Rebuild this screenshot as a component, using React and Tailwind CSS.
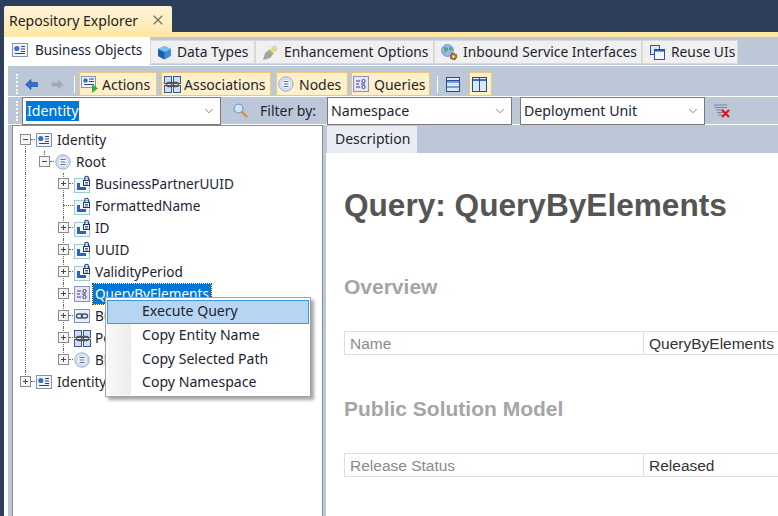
import { X, ChevronDown } from "lucide-react";

const uiFont = "font-['Noto_Sans',sans-serif] text-[14px] text-[#1c2430]";

// Small drawn icons
const BusinessObjectIcon = () => (
  <svg width="16" height="14" viewBox="0 0 16 14" className="shrink-0">
    <rect x="0.5" y="0.5" width="15" height="13" fill="#f4f6fb" stroke="#7f93b8" />
    <circle cx="4.8" cy="5.5" r="2.6" fill="#3d6fc4" />
    <path d="M9 3.5h4M9 6h4M9 8.5h4M3 10.5h10" stroke="#2a3f86" strokeWidth="1" />
  </svg>
);

const NodeIcon = () => (
  <svg width="16" height="16" viewBox="0 0 16 16" className="shrink-0">
    <circle cx="8" cy="8" r="7.2" fill="#dfe9f8" stroke="#8eabd8" />
    <circle cx="8" cy="8" r="5" fill="#f7f9fd" stroke="#b9cbe8" />
    <path d="M5.5 5.5h5M5.5 8h5M5.5 10.5h5" stroke="#5a6c96" strokeWidth="1" />
  </svg>
);

const ElementIcon = () => (
  <svg width="17" height="18" viewBox="0 0 17 18" className="shrink-0">
    <rect x="0.5" y="3.5" width="15" height="14" fill="#f4f9fa" stroke="#9ccacd" />
    <path d="M3 15V8h3v4h6v3z" fill="#2f5fc4" />
    <rect x="9.5" y="5.5" width="6" height="5" fill="#fff" stroke="#24346e" />
    <path d="M10.8 5.5V3a1.8 1.8 0 0 1 3.6 0v2.5" fill="none" stroke="#24346e" strokeWidth="1.1" />
    <path d="M11 7.5h3M11 9h3" stroke="#24346e" strokeWidth="0.8" />
  </svg>
);

const QueryIcon = () => (
  <svg width="16" height="16" viewBox="0 0 16 16" className="shrink-0">
    <rect x="0.5" y="0.5" width="15" height="15" fill="#e6e6f6" stroke="#8b8fc6" />
    <path d="M3 5h4M3 8h3M3 11h4" stroke="#353f8f" strokeWidth="1" />
    <circle cx="10.5" cy="5" r="1.6" fill="#fff" stroke="#353f8f" />
    <circle cx="10.5" cy="11" r="1.6" fill="#fff" stroke="#353f8f" />
    <path d="M8 8h4" stroke="#353f8f" />
  </svg>
);

const LinkIcon = () => (
  <svg width="16" height="14" viewBox="0 0 16 14" className="shrink-0">
    <rect x="0.5" y="0.5" width="15" height="13" fill="#e9eef7" stroke="#7f93b8" />
    <rect x="2.5" y="5" width="6" height="4" rx="2" fill="none" stroke="#42526e" strokeWidth="1.4" />
    <rect x="7.5" y="5" width="6" height="4" rx="2" fill="none" stroke="#42526e" strokeWidth="1.4" />
  </svg>
);

const AssociationIcon = () => (
  <svg width="17" height="17" viewBox="0 0 17 17" className="shrink-0">
    <rect x="0.5" y="0.5" width="7" height="7" fill="#cfe0f5" stroke="#39598f" />
    <rect x="9.5" y="0.5" width="7" height="7" fill="#cfe0f5" stroke="#39598f" />
    <rect x="0.5" y="9.5" width="7" height="7" fill="#cfe0f5" stroke="#39598f" />
    <rect x="9.5" y="9.5" width="7" height="7" fill="#cfe0f5" stroke="#39598f" />
    <rect x="2.5" y="6.5" width="7" height="4" rx="2" fill="none" stroke="#4a5568" strokeWidth="1.4" />
    <rect x="7.5" y="6.5" width="7" height="4" rx="2" fill="none" stroke="#4a5568" strokeWidth="1.4" />
  </svg>
);

const ActionIcon = () => (
  <svg width="17" height="18" viewBox="0 0 17 18" className="shrink-0">
    <rect x="0.5" y="1.5" width="14" height="11" fill="#f4f6fb" stroke="#7f93b8" />
    <circle cx="4.5" cy="5.5" r="2.3" fill="#3d6fc4" />
    <path d="M8 4h5M8 6.5h5M3 9.5h10" stroke="#2a3f86" />
    <path d="M11 9l6 4.5-6 4.5z" fill="#3fae3f" />
  </svg>
);

const CubeIcon = () => (
  <svg width="15" height="15" viewBox="0 0 15 15" className="shrink-0">
    <path d="M7.5 1L14 4v7l-6.5 3.5L1 11V4z" fill="#3a8fd8" />
    <path d="M1 4l6.5 3L14 4 7.5 1z" fill="#7cc0f0" />
    <path d="M7.5 7v7.5L1 11V4z" fill="#1f5fae" />
  </svg>
);

const EnhancementIcon = () => (
  <svg width="17" height="17" viewBox="0 0 17 17" className="shrink-0">
    <path d="M1 16l2-7 5-4 4 4-4 5z" fill="#a3a3a3" />
    <path d="M9 4l3-3 4 3-3 4z" fill="#d4d4d4" />
    <path d="M7.5 5.5l4 4M9.5 3.5l4 4" stroke="#e8d22a" strokeWidth="1.6" />
  </svg>
);

const InboundIcon = () => (
  <svg width="17" height="17" viewBox="0 0 17 17" className="shrink-0">
    <circle cx="6.5" cy="6.5" r="6" fill="#8fbbe6" stroke="#7a9bc0" />
    <path d="M3 3.5c2-1 4 0 4 2s-3 1-3 4M9 2c1 2 3 2 3 4-2 0-3 1-4 0z" fill="#5f9e6f" />
    <circle cx="12.5" cy="12.5" r="3" fill="#c48a2a" stroke="#7a5410" strokeWidth="1.6" strokeDasharray="1.5 0.8" />
    <circle cx="12.5" cy="12.5" r="1.1" fill="#fff" />
  </svg>
);

const ReuseIcon = () => (
  <svg width="15" height="15" viewBox="0 0 15 15" className="shrink-0 mx-[1px]">
    <rect x="0.5" y="0.5" width="9" height="9" fill="#dbe6f6" stroke="#2a56a8" />
    <rect x="4.5" y="4.5" width="10" height="10" fill="#f4f7fc" stroke="#2a56a8" />
    <rect x="4.5" y="4.5" width="10" height="2" fill="#2a56a8" />
  </svg>
);

const BackArrow = () => (
  <svg width="13" height="11" viewBox="0 0 13 11" className="shrink-0">
    <path d="M0.5 5.5L6 0.5v3h6.5v4H6v3z" fill="#2f6fd0" stroke="#1c4a98" strokeWidth="0.6" />
  </svg>
);

const ForwardArrow = () => (
  <svg width="13" height="11" viewBox="0 0 13 11" className="shrink-0">
    <path d="M12.5 5.5L7 0.5v3H0.5v4H7v3z" fill="#a2a8b2" />
  </svg>
);

const RowsIcon = () => (
  <svg width="14" height="15" viewBox="0 0 14 15" className="shrink-0">
    <rect x="0.5" y="0.5" width="13" height="14" fill="#dbe8f8" stroke="#1f4fa0" />
    <path d="M0.5 3.5h13M0.5 5h13M0.5 10h13" stroke="#1f4fa0" strokeWidth="1.2" />
  </svg>
);

const ColumnsIcon = () => (
  <svg width="15" height="15" viewBox="0 0 15 15" className="shrink-0">
    <rect x="0.5" y="0.5" width="14" height="14" fill="#dbe8f8" stroke="#1f4fa0" />
    <path d="M0.5 3h14" stroke="#1f4fa0" strokeWidth="1.6" />
    <path d="M7.5 0.5v14" stroke="#1f4fa0" />
  </svg>
);

const SearchIcon = () => (
  <svg width="15" height="15" viewBox="0 0 15 15" className="shrink-0">
    <path d="M8.5 8.5l5 5" stroke="#d9923c" strokeWidth="2.4" strokeLinecap="round" />
    <circle cx="5.5" cy="5.5" r="4.4" fill="#cfe6f8" stroke="#7fa6c8" strokeWidth="1.4" />
  </svg>
);

const ClearFilterIcon = () => (
  <svg width="17" height="14" viewBox="0 0 17 14" className="shrink-0">
    <path d="M0 1h13M1 3.5h12M2 6h8M3 8.5h6M4 11h4" stroke="#7c8494" />
    <path d="M8 6l7 7M15 6l-7 7" stroke="#e01010" strokeWidth="2" />
  </svg>
);

// Grip dots at the left of each toolbar
const Grip = () => (
  <div className="w-[3px] h-[20px] border-l-2 border-dotted border-white shrink-0" />
);

const ToolButton = ({ icon, label, width, gap = "gap-[5px]" }) => (
  <div className={`flex items-center h-[24px] pl-[1px] bg-[#fff0c9] border border-[#f0c67c] shrink-0 ${gap} ${width}`}>
    {icon}
    {label && <span>{label}</span>}
  </div>
);

const Tab = ({ icon, label, width }) => (
  <div className={`flex items-center gap-[5px] h-[24px] mt-[3px] pt-[1px] pl-[6px] bg-[#f0f0f0] border border-[#d9d9d9] text-[13.8px] shrink-0 ${width}`}>
    {icon}
    <span>{label}</span>
  </div>
);

const Combo = ({ width, children }) => (
  <div className={`flex items-center justify-between h-[28px] pl-[3px] pr-[4px] bg-white border border-[#7a7a7a] shrink-0 text-[14.2px] ${width}`}>
    {children}
    <ChevronDown size={14} strokeWidth={1.2} className="text-[#555]" />
  </div>
);

const Dotted = ({ className }) => <div className={`absolute ${className}`} />;

// expander box for tree rows
const Expander = ({ open, above, below }) => (
  <div className="relative w-[19px] h-[22px] shrink-0">
    {above && <Dotted className="left-[9px] top-0 h-[6px] border-l border-dotted border-[#666]" />}
    {below && <Dotted className="left-[9px] top-[15px] h-[7px] border-l border-dotted border-[#666]" />}
    <div className="absolute left-[4px] top-[5px] w-[11px] h-[11px] bg-[#f5f5f5] border border-[#8a8a8a] flex items-center justify-center">
      <svg width="9" height="9" viewBox="0 0 9 9">
        <path d={open ? "M2 4.5h5" : "M2 4.5h5M4.5 2v5"} stroke="#3c4a66" />
      </svg>
    </div>
    <Dotted className="left-[15px] top-[10px] w-[4px] border-t border-dotted border-[#666]" />
  </div>
);

const LeafConnector = () => (
  <div className="relative w-[19px] h-[22px] shrink-0">
    <Dotted className="left-[9px] top-0 h-[22px] border-l border-dotted border-[#666]" />
    <Dotted className="left-[9px] top-[10px] w-[10px] border-t border-dotted border-[#666]" />
  </div>
);

const Guide = ({ on }) => (
  <div className="w-[19px] h-[22px] shrink-0 relative">
    {on && <Dotted className="left-[9px] top-0 h-[22px] border-l border-dotted border-[#666]" />}
  </div>
);

const TreeRow = ({ guides = [], children, icon, label, selected }) => (
  <div className="flex items-center h-[22px] text-[13.6px]">
    {guides.map((g, i) => <Guide key={i} on={g} />)}
    {children}
    <div className="w-[18px] flex justify-center shrink-0 mr-[2px]">{icon}</div>
    <span className={selected ? "bg-[#0078d7] text-white px-[2px] h-[20px] leading-[20px] outline-1 outline-dotted outline-[#7a3b00]" : "px-[2px]"}>{label}</span>
  </div>
);

const PropertyRow = ({ name, value }) => (
  <div className="flex h-[24px] w-[480px] border border-[#dedede] text-[15.5px] leading-[23px]">
    <div className="w-[299px] pl-[5px] text-[#8a8a8a] border-r border-[#dedede] shrink-0">{name}</div>
    <div className="pl-[5px] text-[#333]">{value}</div>
  </div>
);

const menuItems = ["Copy Entity Name", "Copy Selected Path", "Copy Namespace"];

const App = () => {
  const elementRows = ["BusinessPartnerUUID", "FormattedName", "ID", "UUID", "ValidityPeriod"];

  return (
    <div className={`relative w-[778px] h-[516px] overflow-hidden bg-[#2d3e5c] pl-[4px] flex flex-col ${uiFont}`}>
      {/* document tab */}
      <div className="h-[32px] pt-[6px] shrink-0">
        <div className="flex items-center justify-between w-[168px] h-[26px] pt-[2px] pl-[5px] pr-[6px] rounded-t-[2px] bg-gradient-to-b from-[#fff4d8] to-[#ffe9b0]">
          <span className="text-[#222]">Repository Explorer</span>
          <X size={16} strokeWidth={1.6} className="text-[#6f6a5a]" />
        </div>
      </div>
      <div className="h-[5px] bg-[#ffe8a6] shrink-0" />

      <div className="flex-1 min-h-0 bg-[#bcc7d8] flex flex-col">
        {/* main tabs */}
        <div className="flex h-[28px] shrink-0">
          <div className="flex items-center gap-[7px] w-[146px] h-[28px] pb-[2px] pl-[8px] bg-white text-[13.5px] shrink-0">
            <BusinessObjectIcon />
            <span>Business Objects</span>
          </div>
          <Tab width="w-[105px]" icon={<CubeIcon />} label="Data Types" />
          <Tab width="w-[179px]" icon={<EnhancementIcon />} label="Enhancement Options" />
          <Tab width="w-[208px]" icon={<InboundIcon />} label="Inbound Service Interfaces" />
          <Tab width="w-[96px]" icon={<ReuseIcon />} label="Reuse UIs" />
        </div>

        <div className="flex-1 min-h-0 bg-white pl-[4px] flex flex-col">
          <div className="flex-1 min-h-0 bg-[#bcc7d8] mt-[1px] flex flex-col">
            {/* toolbar one */}
            <div className="flex items-center h-[31px] pl-[8px] pt-[6px] border-b border-white shrink-0">
              <Grip />
              <div className="ml-[6px] flex items-center gap-[13px]">
                <BackArrow />
                <ForwardArrow />
              </div>
              <div className="w-px h-[17px] bg-white ml-[10px] mr-[4px]" />
              <ToolButton width="w-[78px]" gap="gap-[4px]" icon={<ActionIcon />} label="Actions" />
              <div className="w-[4px]" />
              <ToolButton width="w-[110px]" gap="gap-[3px] pl-[2px]" icon={<AssociationIcon />} label="Associations" />
              <div className="w-[5px]" />
              <ToolButton width="w-[72px]" icon={<NodeIcon />} label="Nodes" />
              <div className="w-[3px]" />
              <ToolButton width="w-[79px]" icon={<QueryIcon />} label="Queries" />
              <div className="w-px h-[17px] bg-white ml-[7px] mr-[8px]" />
              <RowsIcon />
              <div className="w-[9px]" />
              <ToolButton width="w-[23px] pl-[2px]" icon={<ColumnsIcon />} />
            </div>

            {/* toolbar two */}
            <div className="flex items-center h-[28px] pl-[8px] border-b border-white shrink-0">
              <Grip />
              <div className="w-[3px]" />
              <Combo width="w-[199px]">
                <span className="bg-[#0078d7] text-white px-[1px] leading-[20px]">Identity</span>
              </Combo>
              <div className="ml-[12px]"><SearchIcon /></div>
              <span className="ml-[12px] w-[67px] shrink-0">Filter by:</span>
              <Combo width="w-[185px]"><span>Namespace</span></Combo>
              <div className="w-[8px]" />
              <Combo width="w-[185px]"><span>Deployment Unit</span></Combo>
              <div className="ml-[9px]"><ClearFilterIcon /></div>
            </div>

            {/* split panes */}
            <div className="flex-1 min-h-0 flex pl-[4px]">
              <div className="w-[311px] shrink-0 bg-white border-l border-r border-t border-[#8c8c8c] pl-[3px] pt-[3px]">
                <TreeRow icon={<BusinessObjectIcon />} label="Identity">
                  <Expander open below />
                </TreeRow>
                <TreeRow guides={[true]} icon={<NodeIcon />} label="Root">
                  <Expander open above />
                </TreeRow>
                {elementRows.map((name) => (
                  <TreeRow key={name} guides={[true, false]} icon={<ElementIcon />} label={name}>
                    {name === "FormattedName" ? <LeafConnector /> : <Expander above below />}
                  </TreeRow>
                ))}
                <TreeRow guides={[true, false]} icon={<QueryIcon />} label="QueryByElements" selected>
                  <Expander above below />
                </TreeRow>
                <TreeRow guides={[true, false]} icon={<LinkIcon />} label="BusinessPartner">
                  <Expander above below />
                </TreeRow>
                <TreeRow guides={[true, false]} icon={<AssociationIcon />} label="Person">
                  <Expander above below />
                </TreeRow>
                <TreeRow guides={[true, false]} icon={<NodeIcon />} label="Block">
                  <Expander above />
                </TreeRow>
                <TreeRow icon={<BusinessObjectIcon />} label="IdentityRole">
                  <Expander above />
                </TreeRow>
              </div>

              {/* description pane */}
              <div className="flex-1 min-w-0 ml-[3px] flex flex-col">
                <div className="h-[28px] pt-[1px] shrink-0">
                  <div className="ml-[1px] w-[90px] h-[27px] bg-[#e9edf3] pl-[8px] leading-[25px]">Description</div>
                </div>
                <div className="flex-1 bg-white pl-[18px] font-['Liberation_Sans',sans-serif]">
                  <h1 className="mt-[32px] text-[31.6px] leading-[40px] font-bold text-[#555]">Query: QueryByElements</h1>
                  <h2 className="mt-[50px] text-[21px] leading-[24px] font-bold text-[#a5a5a5]">Overview</h2>
                  <div className="mt-[32px]"><PropertyRow name="Name" value="QueryByElements" /></div>
                  <h2 className="mt-[42px] text-[21px] leading-[24px] font-bold text-[#a5a5a5]">Public Solution Model</h2>
                  <div className="mt-[32px]"><PropertyRow name="Release Status" value="Released" /></div>
                </div>
              </div>
            </div>
          </div>
        </div>
      </div>

      {/* context menu */}
      <div className="absolute left-[105px] top-[297px] w-[206px] h-[100px] bg-white border border-[#a0a0a0] shadow-[3px_3px_3px_rgba(0,0,0,0.35)] p-[1px] flex flex-col text-[14.1px]">
        <div className="absolute left-[1px] top-[1px] bottom-[1px] w-[24px] bg-gradient-to-r from-[#f8f8f8] to-[#ececec]" />
        <div className="relative h-[24px] mt-[1px] bg-[#b5d5f2] border border-[#3f97e0] pl-[34px] leading-[20px]">Execute Query</div>
        {menuItems.map((item) => (
          <div key={item} className="relative h-[23.6px] pl-[35px] leading-[22px]">{item}</div>
        ))}
      </div>
    </div>
  );
};

export default App;
